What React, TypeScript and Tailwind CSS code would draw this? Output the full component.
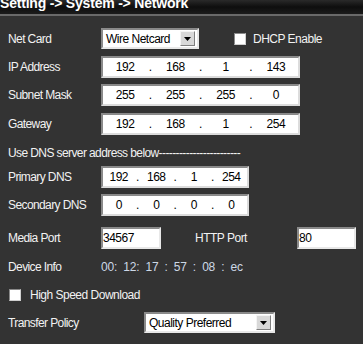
import React from "react";

const FONT = { fontFamily: '"Liberation Sans", Arial, sans-serif' };

function IpBox({ parts, width }: { parts: string[]; width: string }) {
  return (
    <div
      className={`flex h-[22px] ${width} shrink-0 items-center border-2 border-t-[#8a8a8a] border-l-[#8a8a8a] border-b-[#dcdcdc] border-r-[#dcdcdc] bg-white text-[12px] tracking-[-0.5px] text-black`}
    >
      {parts.map((p, i) => (
        <React.Fragment key={i}>
          <span className="flex-1 text-center">{p}</span>
          {i < parts.length - 1 && <span className="w-[6px] text-center">.</span>}
        </React.Fragment>
      ))}
    </div>
  );
}

function Select({ value, width }: { value: string; width: string }) {
  return (
    <div
      className={`flex h-[21px] ${width} shrink-0 items-center justify-between whitespace-nowrap border-2 border-t-[#8a8a8a] border-l-[#8a8a8a] border-b-[#e8e8e8] border-r-[#e8e8e8] bg-white pl-[3px] pr-[2px] text-[12px] tracking-[-0.5px] text-black`}
    >
      <span>{value}</span>
      <span className="flex h-[15px] w-[15px] items-center justify-center border border-t-[#f4f4f4] border-l-[#f4f4f4] border-b-[#808080] border-r-[#808080] bg-[#d8d8d8]">
        <svg viewBox="0 0 7 4" className="h-[4px] w-[7px]">
          <path d="M0 0h7L3.5 4z" fill="#000" />
        </svg>
      </span>
    </div>
  );
}

function Check() {
  return (
    <span className="h-[12px] w-[12px] shrink-0 border border-t-[#8a8a8a] border-l-[#8a8a8a] border-b-[#d0d0d0] border-r-[#d0d0d0] bg-white" />
  );
}

function Row({ label, children, mt }: { label: string; children: React.ReactNode; mt: string }) {
  return (
    <div className={`flex items-center whitespace-nowrap ${mt}`}>
      <span className="w-[93px] shrink-0 text-[12px] tracking-[-0.6px] text-[#f2f2f2]">{label}</span>
      {children}
    </div>
  );
}

export default function App() {
  return (
    <div className="h-[344px] w-[363px] overflow-hidden bg-[#333333]" style={FONT}>
      {/* title bar */}
      <div className="flex h-[14px] items-start overflow-hidden bg-gradient-to-b from-[#2a2a2a] via-[#0e0e0e] to-[#1c1c1c]">
        <div className="-mt-[5px] whitespace-nowrap text-[14px] font-bold leading-[17px] tracking-[-0.2px] text-white">
          Setting -&gt; System -&gt; Network
        </div>
      </div>
      <div className="h-[2px] bg-[#6a6a6a]" />

      <div className="flex flex-col pl-[8px]">
        <Row label="Net Card" mt="mt-[12px]">
          <Select value="Wire Netcard" width="w-[98px]" />
          <span className="ml-[35px] flex items-center gap-[7px] text-[12px] tracking-[-0.5px] text-[#f2f2f2]">
            <Check />
            DHCP Enable
          </span>
        </Row>
        <Row label="IP Address" mt="mt-[7px]">
          <IpBox parts={["192", "168", "1", "143"]} width="w-[199px]" />
        </Row>
        <Row label="Subnet Mask" mt="mt-[6px]">
          <IpBox parts={["255", "255", "255", "0"]} width="w-[199px]" />
        </Row>
        <Row label="Gateway" mt="mt-[7px]">
          <IpBox parts={["192", "168", "1", "254"]} width="w-[199px]" />
        </Row>

        <div className="mt-[10px] h-[16px] whitespace-nowrap text-[12px] leading-[16px] tracking-[-0.6px] text-[#f2f2f2]">
          Use DNS server address below------------------------
        </div>

        <Row label="Primary DNS" mt="mt-[5px]">
          <IpBox parts={["192", "168", "1", "254"]} width="w-[148px]" />
        </Row>
        <Row label="Secondary DNS" mt="mt-[6px]">
          <IpBox parts={["0", "0", "0", "0"]} width="w-[148px]" />
        </Row>

        <Row label="Media Port" mt="mt-[11px]">
          <div className="flex h-[22px] w-[60px] shrink-0 items-center border-2 border-t-[#8a8a8a] border-l-[#8a8a8a] border-b-[#e8e8e8] border-r-[#e8e8e8] bg-white text-[12px] tracking-[-0.5px] text-black">
            34567
          </div>
          <span className="ml-[34px] w-[102px] shrink-0 text-[12px] tracking-[-0.5px] text-[#f2f2f2]">HTTP Port</span>
          <div className="flex h-[22px] w-[59px] shrink-0 items-center border-2 border-t-[#8a8a8a] border-l-[#8a8a8a] border-b-[#e8e8e8] border-r-[#e8e8e8] bg-white text-[12px] tracking-[-0.5px] text-black">
            80
          </div>
        </Row>

        <Row label="Device Info" mt="mt-[9px]">
          <span className="text-[12px] tracking-[-0.2px] text-[#cdd8e6] [word-spacing:3px]">
            00: 12: 17 : 57 : 08 : ec
          </span>
        </Row>

        <div className="mt-[10px] flex items-center gap-[9px] whitespace-nowrap pl-[1px] text-[12px] tracking-[-0.5px] text-[#f2f2f2]">
          <Check />
          High Speed Download
        </div>

        <div className="mt-[8px] flex items-center whitespace-nowrap">
          <span className="w-[136px] shrink-0 text-[12px] tracking-[-0.6px] text-[#f2f2f2]">Transfer Policy</span>
          <Select value="Quality Preferred" width="w-[131px]" />
        </div>
      </div>
    </div>
  );
}
